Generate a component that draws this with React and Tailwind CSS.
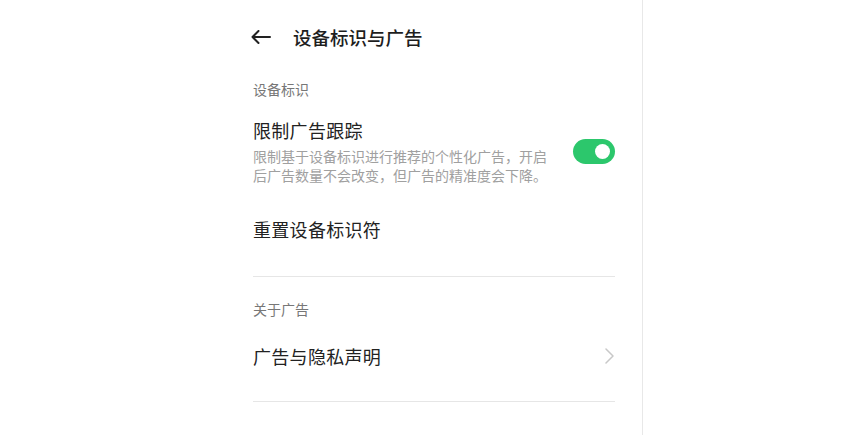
import React from "react";

const font = { fontFamily: '"Noto Sans CJK SC", "Noto Sans", sans-serif' };

export default function App() {
  return (
    <div className="w-full h-[435px] bg-white flex overflow-hidden" style={font}>
      <div className="w-[643px] h-full border-r border-[#e8e8e8] flex flex-col">
        {/* Header */}
        <div className="h-[74px] flex items-center pl-[251px]">
          <svg width="20" height="14" viewBox="0 0 20 14" fill="none" stroke="#222" strokeWidth="2" strokeLinecap="round" strokeLinejoin="round">
            <path d="M19 7H2" />
            <path d="M7.5 1L1.5 7l6 6" />
          </svg>
          <span className="ml-[22px] text-[18.5px] leading-[26px] font-medium text-[#1e1e1e]">设备标识与广告</span>
        </div>

        <div className="ml-[253px] w-[362px] flex flex-col">
          <div className="mt-[5px] text-[14px] leading-[20px] text-[#777]">设备标识</div>

          <div className="mt-[18px] flex items-center justify-between">
            <div className="flex flex-col">
              <div className="text-[18px] leading-[26px] tracking-[0.3px] text-[#222]">限制广告跟踪</div>
              <div className="mt-[4px] w-[300px] text-[14px] leading-[19px] text-[#a0a0a0]">
                限制基于设备标识进行推荐的个性化广告，开启后广告数量不会改变，但广告的精准度会下降。
              </div>
            </div>
            <div className="w-[42px] h-[25px] rounded-full bg-[#2cc76c] flex items-center justify-end pr-[5px] mt-[1px]">
              <div className="w-[15px] h-[15px] rounded-full bg-white" />
            </div>
          </div>

          <div className="mt-[31px] text-[18px] leading-[26px] tracking-[0.3px] text-[#222]">重置设备标识符</div>

          <div className="mt-[34px] h-px bg-[#e6e6e6]" />

          <div className="mt-[22px] text-[14px] leading-[20px] text-[#777]">关于广告</div>

          <div className="mt-[24px] flex items-center justify-between">
            <div className="text-[18px] leading-[26px] tracking-[0.3px] text-[#222]">广告与隐私声明</div>
            <svg width="9" height="16" viewBox="0 0 9 16" fill="none" stroke="#c8c8c8" strokeWidth="1.5" strokeLinecap="round" strokeLinejoin="round" className="mr-[1px]">
              <path d="M1 1l7 7-7 7" />
            </svg>
          </div>

          <div className="mt-[32px] h-px bg-[#e6e6e6]" />
        </div>
      </div>
      <div className="flex-1" />
    </div>
  );
}
